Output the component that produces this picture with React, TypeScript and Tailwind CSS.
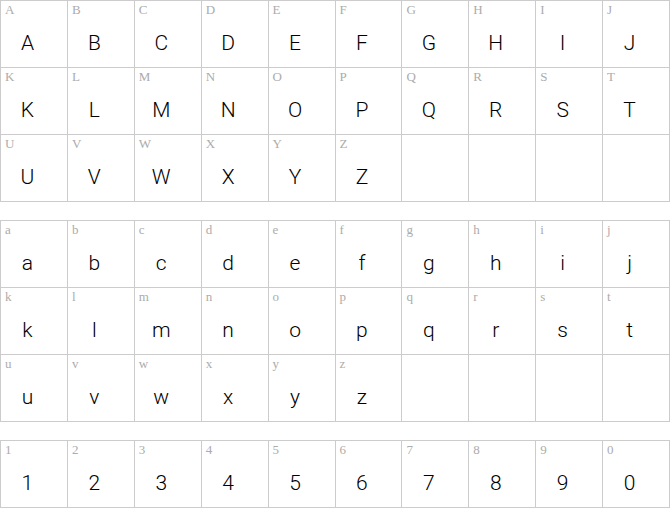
import React from "react";

const upper = "ABCDEFGHIJKLMNOPQRSTUVWXYZ".split("");
const lower = "abcdefghijklmnopqrstuvwxyz".split("");
const digits = "1234567890".split("");

function Cell({ ch }: { ch?: string }) {
  return (
    <div className="h-[67px] border-r border-b border-[#cccccc] flex flex-col">
      {ch ? (
        <>
          <div
            className="h-[18px] pl-[4px] pt-[1px] text-[13px] leading-[15px] text-[#acacac]"
            style={{ fontFamily: '"Liberation Serif", serif' }}
          >
            {ch}
          </div>
          <div
            className="flex-1 flex items-center justify-center pr-[13px] pt-[2px] text-[21px] font-light text-black"
            style={{ fontFamily: 'Roboto, "Liberation Sans", sans-serif' }}
          >
            {ch}
          </div>
        </>
      ) : null}
    </div>
  );
}

function Table({ chars, rows }: { chars: string[]; rows: number }) {
  const cells: (string | undefined)[] = [];
  for (let i = 0; i < rows * 10; i++) cells.push(chars[i]);
  return (
    <div className="grid grid-cols-10 border-l border-t border-[#cccccc] w-[670px]">
      {cells.map((c, i) => (
        <Cell key={i} ch={c} />
      ))}
    </div>
  );
}

export default function App() {
  return (
    <div className="w-[670px] h-[508px] bg-white flex flex-col gap-[18px] overflow-hidden">
      <Table chars={upper} rows={3} />
      <Table chars={lower} rows={3} />
      <Table chars={digits} rows={1} />
    </div>
  );
}
